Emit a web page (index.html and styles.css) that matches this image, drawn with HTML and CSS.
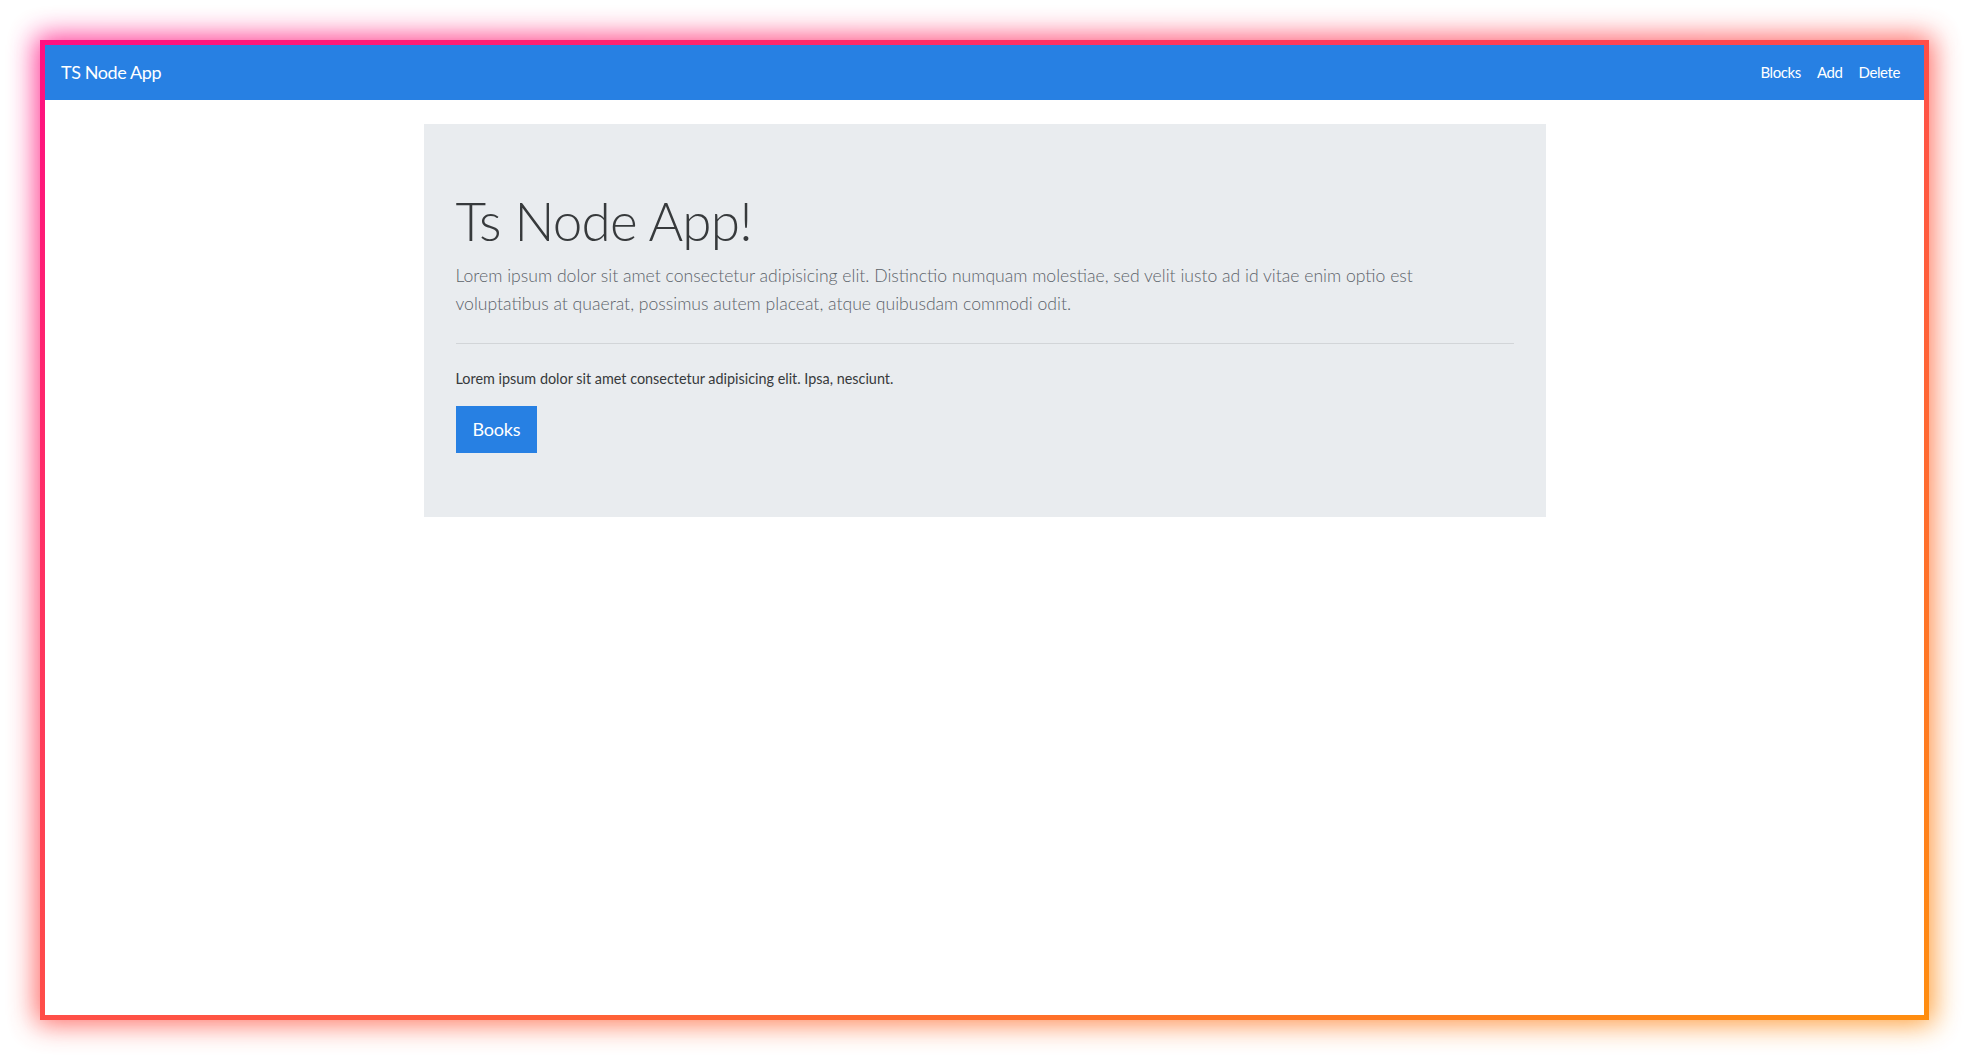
FILE: index.html
```html
<!DOCTYPE html>
<html lang="en">
<head>
<meta charset="utf-8">
<title>TS Node App</title>
<link rel="stylesheet" href="styles.css">
</head>
<body>
<div class="frame">
  <div class="screen">
    <nav class="navbar">
      <a class="brand" href="#">TS Node App</a>
      <ul class="nav">
        <li><a class="nav-link" href="#">Blocks</a></li>
        <li><a class="nav-link" href="#">Add</a></li>
        <li><a class="nav-link" href="#">Delete</a></li>
      </ul>
    </nav>
    <main class="jumbotron">
      <h1 class="display">Ts Node App!</h1>
      <p class="lead">Lorem ipsum dolor sit amet consectetur adipisicing elit. Distinctio numquam molestiae, sed velit iusto ad id vitae enim optio est voluptatibus at quaerat, possimus autem placeat, atque quibusdam commodi odit.</p>
      <hr class="divider">
      <p class="text">Lorem ipsum dolor sit amet consectetur adipisicing elit. Ipsa, nesciunt.</p>
      <a class="btn" href="#">Books</a>
    </main>
  </div>
</div>
</body>
</html>
```
FILE: styles.css
```css
* { box-sizing: border-box; }

html, body { height: 100%; }

body {
  margin: 0;
  padding: 40px;
  background: #ffffff;
  font-family: "Lato", "Noto Sans", sans-serif;
  color: #373a3c;
}

.frame {
  position: relative;
  height: 980px;
  padding: 5px;
  background: linear-gradient(to bottom right, #ff0f82, #ff8d0e);
}

.frame::before {
  content: "";
  position: absolute;
  inset: -4px;
  z-index: -1;
  background: linear-gradient(to bottom right, #ff0f82, #ff8d0e);
  filter: blur(14px);
  opacity: 0.85;
}

.screen {
  height: 100%;
  background: #ffffff;
  display: flex;
  flex-direction: column;
  align-items: center;
}

.navbar {
  align-self: stretch;
  height: 55px;
  flex: none;
  display: flex;
  align-items: center;
  justify-content: space-between;
  padding: 0 16px 0 16px;
  background: #2780e3;
}

.brand {
  color: #ffffff;
  text-decoration: none;
  font-size: 18px;
  line-height: 27px;
  letter-spacing: -0.4px;
}

.nav {
  list-style: none;
  margin: 0;
  padding: 0;
  display: flex;
  align-items: center;
}

.nav-link {
  display: block;
  padding: 0 8px 2px;
  color: #ffffff;
  text-decoration: none;
  font-size: 15px;
  line-height: 22px;
  letter-spacing: -0.4px;
}

.jumbotron {
  width: 1122px;
  margin-top: 24px;
  padding: 65px 32px 64px;
  background: #e9ecef;
  display: flex;
  flex-direction: column;
  align-items: flex-start;
}

.display {
  margin: 0 0 9px;
  font-size: 53px;
  line-height: 64px;
  font-weight: 300;
  letter-spacing: -0.8px;
  color: #373a3c;
}

.lead {
  max-width: 1020px;
  margin: 0;
  font-size: 17.6px;
  line-height: 28px;
  font-weight: 300;
  color: #5c636a;
}

.divider {
  align-self: stretch;
  margin: 25px 0 24px;
  border: 0;
  border-top: 1px solid #d2d5d8;
  height: 0;
}

.text {
  margin: 0 0 16px;
  font-size: 14.4px;
  line-height: 22px;
  color: #373a3c;
}

.btn {
  display: inline-block;
  padding: 10px 17px;
  background: #2780e3;
  color: #ffffff;
  text-decoration: none;
  font-size: 18px;
  line-height: 27px;
  letter-spacing: -0.2px;
}
```
